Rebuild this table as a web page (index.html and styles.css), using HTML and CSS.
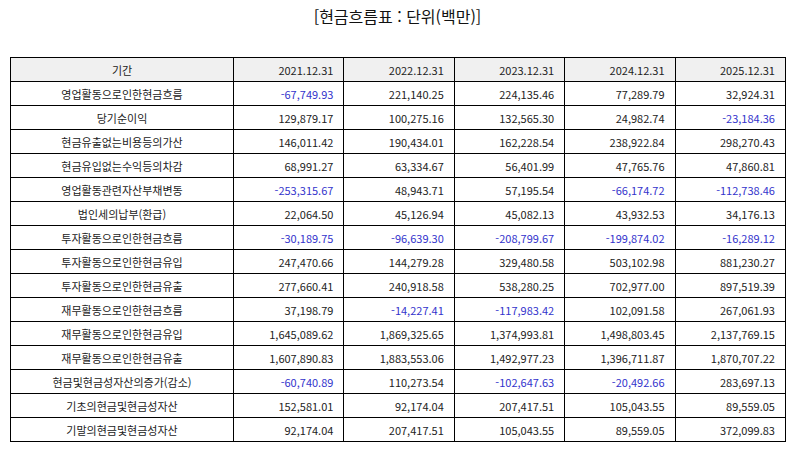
FILE: index.html
```html
<!DOCTYPE html>
<html lang="ko">
<head>
<meta charset="utf-8">
<link rel="stylesheet" href="styles.css">
</head>
<body>
<div class="page">
  <h1 class="title">[현금흐름표 : 단위(백만)]</h1>
  <table class="cf">
    <colgroup>
      <col class="c-label"><col class="c-num"><col class="c-num"><col class="c-num"><col class="c-num"><col class="c-num">
    </colgroup>
    <thead>
      <tr><th class="lbl">기간</th><th>2021.12.31</th><th>2022.12.31</th><th>2023.12.31</th><th>2024.12.31</th><th>2025.12.31</th></tr>
    </thead>
    <tbody>
      <tr><td class="lbl">영업활동으로인한현금흐름</td><td class="neg">-67,749.93</td><td>221,140.25</td><td>224,135.46</td><td>77,289.79</td><td>32,924.31</td></tr>
      <tr><td class="lbl">당기순이익</td><td>129,879.17</td><td>100,275.16</td><td>132,565.30</td><td>24,982.74</td><td class="neg">-23,184.36</td></tr>
      <tr><td class="lbl">현금유출없는비용등의가산</td><td>146,011.42</td><td>190,434.01</td><td>162,228.54</td><td>238,922.84</td><td>298,270.43</td></tr>
      <tr><td class="lbl">현금유입없는수익등의차감</td><td>68,991.27</td><td>63,334.67</td><td>56,401.99</td><td>47,765.76</td><td>47,860.81</td></tr>
      <tr><td class="lbl">영업활동관련자산부채변동</td><td class="neg">-253,315.67</td><td>48,943.71</td><td>57,195.54</td><td class="neg">-66,174.72</td><td class="neg">-112,738.46</td></tr>
      <tr><td class="lbl">법인세의납부(환급)</td><td>22,064.50</td><td>45,126.94</td><td>45,082.13</td><td>43,932.53</td><td>34,176.13</td></tr>
      <tr><td class="lbl">투자활동으로인한현금흐름</td><td class="neg">-30,189.75</td><td class="neg">-96,639.30</td><td class="neg">-208,799.67</td><td class="neg">-199,874.02</td><td class="neg">-16,289.12</td></tr>
      <tr><td class="lbl">투자활동으로인한현금유입</td><td>247,470.66</td><td>144,279.28</td><td>329,480.58</td><td>503,102.98</td><td>881,230.27</td></tr>
      <tr><td class="lbl">투자활동으로인한현금유출</td><td>277,660.41</td><td>240,918.58</td><td>538,280.25</td><td>702,977.00</td><td>897,519.39</td></tr>
      <tr><td class="lbl">재무활동으로인한현금흐름</td><td>37,198.79</td><td class="neg">-14,227.41</td><td class="neg">-117,983.42</td><td>102,091.58</td><td>267,061.93</td></tr>
      <tr><td class="lbl">재무활동으로인한현금유입</td><td>1,645,089.62</td><td>1,869,325.65</td><td>1,374,993.81</td><td>1,498,803.45</td><td>2,137,769.15</td></tr>
      <tr><td class="lbl">재무활동으로인한현금유출</td><td>1,607,890.83</td><td>1,883,553.06</td><td>1,492,977.23</td><td>1,396,711.87</td><td>1,870,707.22</td></tr>
      <tr><td class="lbl">현금및현금성자산의증가(감소)</td><td class="neg">-60,740.89</td><td>110,273.54</td><td class="neg">-102,647.63</td><td class="neg">-20,492.66</td><td>283,697.13</td></tr>
      <tr><td class="lbl">기초의현금및현금성자산</td><td>152,581.01</td><td>92,174.04</td><td>207,417.51</td><td>105,043.55</td><td>89,559.05</td></tr>
      <tr><td class="lbl">기말의현금및현금성자산</td><td>92,174.04</td><td>207,417.51</td><td>105,043.55</td><td>89,559.05</td><td>372,099.83</td></tr>
    </tbody>
  </table>
</div>
</body>
</html>
```

FILE: styles.css
```css
html, body {
  margin: 0;
  padding: 0;
  background: #ffffff;
}

.page {
  padding: 0 9px 0 10px;
  font-family: "Noto Sans CJK KR", "Noto Sans", sans-serif;
  color: #222222;
}

.title {
  margin: 0;
  height: 57px;
  padding-top: 4px;
  box-sizing: border-box;
  text-align: center;
  font-size: 16px;
  font-weight: 400;
  line-height: 24px;
  color: #111111;
}

.cf {
  width: 775px;
  border-collapse: collapse;
  table-layout: fixed;
  font-size: 11px;
}

.c-label { width: 223px; }
.c-num { width: 110.4px; }

.cf th,
.cf td {
  border: 1px solid #000000;
  height: 24px;
  padding: 0 10px;
  box-sizing: border-box;
  text-align: right;
  font-weight: 400;
  line-height: 14px;
  white-space: nowrap;
}

.cf thead th {
  background: #f0f0f0;
}

.cf .lbl {
  text-align: center;
}

.cf .neg {
  color: #3333cc;
}
```
